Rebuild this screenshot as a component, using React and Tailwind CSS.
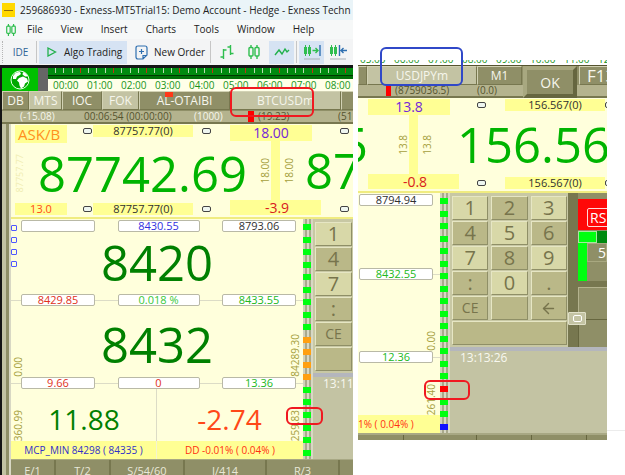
import clsx from 'clsx'
import { ArrowLeft } from 'lucide-react'

const HOURS = ['00:00', '01:00', '02:00', '03:00', '04:00', '05:00', '06:00', '07:00', '08:00']
const MENU = ['File', 'View', 'Insert', 'Charts', 'Tools', 'Window', 'Help']

const G = 'bg-[#00ff10]'
const O = 'bg-[#ffa010]'
const LEFT_METER = [G, G, G, G, G, G, G, G, G, O, O, O, O, G, G, G, G, G, G]
const RIGHT_METER = [G, G, G, G, G, G, G, G, G, G, G, G, G, G, G, 'bg-[#ff0000]', G, G, 'bg-[#1010ff]']

function Candles({ className }) {
  return (
    <svg viewBox="0 0 14 14" className={className} fill="none" stroke="#2fbe4f" strokeWidth="1.4">
      <path d="M4 0v2.5M4 11v3M10 0v2.5M10 11v3" />
      <rect x="2" y="2.5" width="4" height="8.5" rx="1" />
      <rect x="8" y="2.5" width="4" height="8.5" rx="1" />
    </svg>
  )
}

function ShiftIcon({ back }) {
  return (
    <svg viewBox="0 0 18 15" className="h-[15px] w-[18px]" fill="none">
      <path d="M2.5 0v11M6.500 0v11" stroke="#2fbe4f" />
      <path d="M1 2h3v7H1zM5 2h3v7H5z" fill="#2fbe4f" />
      {back ? (
        <path d="M10.500 0v11M18 5.500h-6M14.500 3l-2.500 2.500 2.500 2.500" stroke="#2f6fb0" strokeWidth="1.400" />
      ) : (
        <>
          <path d="M9.500 5.500h5M12.500 3L15 5.500 12.500 8" stroke="#2fbe4f" strokeWidth="1.400" />
          <path d="M17 0v11" stroke="#2f6fb0" strokeWidth="1.400" />
        </>
      )}
      <path d="M1 14h16" stroke="#a9b0b8" />
    </svg>
  )
}

function Toolbar() {
  return (
    <div className="flex h-[26px] shrink-0 items-center overflow-hidden bg-[#f3f4f5] text-[10px] whitespace-nowrap text-[#222]">
      <span className="ml-[2px] h-[22px] border-l border-dotted border-[#b5b5b5]" />
      <button className="ml-[9px] w-[17px] text-[#2f6496]">IDE</button>
      <span className="mr-[2px] ml-[7px] h-[22px] w-px shrink-0 bg-[#c6c6c6]" />
      <button className="flex h-[23px] w-[88px] shrink-0 items-center bg-[#d6e3f3] pl-[8px]">
        <svg viewBox="0 0 10 10" className="mr-[7px] h-[10px] w-[10px]" fill="none" stroke="#22b14c" strokeWidth="1.300">
          <path d="M1 1l7.500 4L1 9z" />
        </svg>
        Algo Trading
      </button>
      <button className="ml-[8px] flex w-[72px] shrink-0 items-center">
        <svg viewBox="0 0 13 15" className="mr-[6px] h-[15px] w-[13px] shrink-0" fill="none" stroke="#2f6fb0" strokeWidth="1.200">
          <path d="M3 1h7q2 0 2 2v7l-4 4H3q-2 0-2-2V3q0-2 2-2zM8 14v-3.500h4M6.500 4v5M4 6.500h5" />
        </svg>
        New Order
      </button>
      <span className="ml-[3px] h-[22px] w-px shrink-0 bg-[#c6c6c6]" />
      <button aria-label="Bars" className="ml-[8px] shrink-0">
        <svg viewBox="0 0 16 14" className="h-[14px] w-[16px]" fill="none" stroke="#2fbe4f" strokeWidth="1.400">
          <path d="M4.500 4v10M4.500 5h3M1.500 12h3M11.500 0v10M8.500 2h3M11.500 8.500h3" />
        </svg>
      </button>
      <button aria-label="Candles" className="ml-[12px] shrink-0">
        <Candles className="h-[14px] w-[14px]" />
      </button>
      <button aria-label="Line" className="ml-[8px] flex h-[23px] w-[25px] shrink-0 items-center justify-center bg-[#d6e3f3]">
        <svg viewBox="0 0 16 10" className="h-[10px] w-[16px]" fill="none" stroke="#22b14c" strokeWidth="1.400">
          <path d="M1 8l4-5 3 4 3-5 2 3 2-2" />
        </svg>
      </button>
      <span className="mx-[2px] h-[22px] w-px shrink-0 bg-[#c6c6c6]" />
      <button aria-label="Auto scroll" className="flex h-[23px] w-[25px] shrink-0 items-center justify-center bg-[#d6e3f3]">
        <ShiftIcon />
      </button>
      <button aria-label="Chart shift" className="ml-[5px] shrink-0">
        <ShiftIcon back />
      </button>
    </div>
  )
}

function Timeline() {
  return (
    <div className="flex h-[23px] shrink-0">
      <div className="flex w-[36px] shrink-0 items-center justify-center bg-[#00c000]">
        <svg viewBox="0 0 20 20" className="h-[20px] w-[20px]">
          <circle cx="10" cy="10" r="9" fill="#00a800" stroke="#e8ffe8" />
          <path d="M3 6l3-3.500 4-.500 1 2-2 1.500-2 1-1 2.500-3 0zM9 8l4-1.500 4 2 1 3-3 2-1 3-3 2-1.500-3-.500-3-2-2zM13 2l3 1.500 2 3-3 0-2.500-2z" fill="#fff" />
        </svg>
      </div>
      <div className="w-[10px] shrink-0 bg-[#666]" />
      <div className="flex min-w-0 flex-1 flex-col overflow-hidden bg-[#ffffe8]">
        <div className="flex h-[7px] shrink-0 justify-between bg-[#008a10] px-[7px]">
          {Array.from({ length: 36 }, (_, i) => (
            <span key={i} className={clsx('h-[5px] w-px', i % 4 === 3 ? 'bg-[#c03010]' : 'bg-[#b8dcb0]')} />
          ))}
        </div>
        <div className="h-[4px] shrink-0 border-t border-[#003800] bg-[#007008]" />
        <div className="flex gap-[8px] pl-[5px] text-[10px] leading-[13px] text-[#18941c]">
          {HOURS.map((h) => (
            <span key={h} className="w-[26px] shrink-0">
              {h}
            </span>
          ))}
        </div>
      </div>
    </div>
  )
}

function Tab({ light, size = 'text-[12px]', className, children }) {
  return (
    <button
      className={clsx(
        'h-[19px] shrink-0 border border-t-[#d2d2b4] border-r-[#77774f] border-b-[#77774f] border-l-[#d2d2b4] leading-[17px] whitespace-nowrap text-[#f6f6ec]',
        light ? 'bg-[#c3c3a3]' : 'bg-[#8f8f67]',
        size,
        className,
      )}
    >
      {children}
    </button>
  )
}

function Pin() {
  return <span className="block h-[6px] w-[9px] shrink-0 rounded-[2px] border border-[#444] bg-[#eef6f0]" />
}

function PriceTag({ gap = 'w-px', children }) {
  return (
    <div className="flex h-[12px] items-center">
      <Pin />
      <span className={clsx('shrink-0', gap)} />
      <span className="w-[100px] shrink-0 bg-[#ffff94] text-center text-[11px] leading-[12px] text-[#303030]">
        {children}
      </span>
      <span className="ml-auto">
        <Pin />
      </span>
    </div>
  )
}

function Upright({ className, children }) {
  return (
    <span className={clsx('rotate-180 whitespace-nowrap [writing-mode:vertical-rl]', className)}>{children}</span>
  )
}

function Spread({ top, bottom }) {
  return (
    <div className="flex w-[91px] shrink-0 flex-col">
      <div className="h-[16px] w-[82px] bg-[#ffff94] text-center text-[14px] leading-[16px] text-[#7326d9]">{top}</div>
      <div className="flex flex-1 items-center pl-[30px] text-[10px] leading-[11px] text-[#a5a03c]">
        <Upright>{top}</Upright>
        <span className="mr-[4px] h-full w-[9px] bg-[#ffff94]" />
        <Upright>{top}</Upright>
      </div>
      <div className="h-[15px] bg-[#ffff94] pl-[3px] text-center text-[14px] leading-[15px] text-[#d82020]">{bottom}</div>
    </div>
  )
}

function Meter({ ticks }) {
  return (
    <div className="flex w-[10px] shrink-0 flex-col justify-around bg-[linear-gradient(90deg,#d2d2bc_0_2px,#a9a98c_2px_4px,#d8d8c4_4px_6px,#a9a98c_6px_8px,#d8d8c4_8px)] pt-[2px]">
      {ticks.map((c, i) => (
        <span key={i} className={clsx('h-[6px] w-[8px]', c)} />
      ))}
    </div>
  )
}

function Box({ className, children }) {
  return (
    <span
      className={clsx(
        'h-[12px] shrink-0 rounded-[2px] border border-[#b9b9a6] bg-white text-center text-[11px] leading-[10px]',
        className,
      )}
    >
      {children}
    </span>
  )
}

function Line({ hidden, className }) {
  return <span className={clsx('h-px', hidden ? '' : 'bg-[#dcdcc6]', className)} />
}

function BoxRow({ hidden, items }) {
  return (
    <div className="flex h-[12px] items-center">
      <Line hidden={hidden} className="w-[10px]" />
      <Box className={clsx('w-[74px]', items[0][1])}>{items[0][0]}</Box>
      <Line hidden={hidden} className="flex-1" />
      <Box className={clsx('w-[82px]', items[1][1])}>{items[1][0]}</Box>
      <Line hidden={hidden} className="flex-1" />
      <Box className={clsx('w-[74px]', items[2][1])}>{items[2][0]}</Box>
      <Line hidden={hidden} className="w-[7px]" />
    </div>
  )
}

function Key({ light, wide, small, children }) {
  return (
    <button
      className={clsx(
        'flex h-[24px] items-center justify-center border border-t-[#e6e6c4] border-r-[#8f8f67] border-b-[#8f8f67] border-l-[#e6e6c4] text-[#77744c]',
        light ? 'bg-[#d8d8a8]' : 'bg-[#bab888]',
        wide && 'col-span-3',
        small ? 'text-[14px] leading-[22px]' : 'text-[20px] leading-[22px]',
      )}
    >
      {children}
    </button>
  )
}

function LogPanel({ time }) {
  return (
    <div className="flex-1 border-t-[4px] border-[#b4b6bd] bg-[#c3c3a3] pl-[10px] text-[12px] leading-[14px] text-[#f8f8f0]">
      {time}
    </div>
  )
}

function Marker({ className }) {
  return <div className={clsx('pointer-events-none absolute rounded-[6px] border-2', className)} />
}

function BitcoinWindow() {
  return (
    <section className="relative flex min-h-screen flex-col overflow-hidden">
      <header className="flex h-[20px] shrink-0 items-center bg-[#eaf4f8] text-[10px] whitespace-nowrap text-[#222]">
        <span className="mr-[5px] ml-[2px] flex h-[14px] w-[13px] shrink-0 items-center justify-center bg-[#ffd800]">
          <span className="h-px w-[9px] bg-[#8c6c10]" />
        </span>
        259686930 - Exness-MT5Trial15: Demo Account - Hedge - Exness Techn
      </header>
      <nav className="flex h-[19px] shrink-0 items-center gap-[18px] bg-[#f6f8f8] pl-[5px] text-[10px] text-[#222]">
        <Candles className="-mr-[8px] h-[12px] w-[12px]" />
        {MENU.map((m) => (
          <button key={m}>{m}</button>
        ))}
      </nav>
      <Toolbar />

      <div className="flex flex-1 flex-col border-t-[3px] border-l-2 border-[#151515] bg-[#c3c3a3]">
        <Timeline />
        <div className="flex h-[20px] shrink-0 overflow-hidden bg-[#8f8f67]">
          <Tab className="w-[27px]">DB</Tab>
          <Tab light className="w-[33px]">MTS</Tab>
          <Tab className="w-[40px]">IOC</Tab>
          <Tab light className="w-[37px]">FOK</Tab>
          <Tab className="relative w-[91px]">
            AL-OTAIBI
            <span className="absolute top-0 left-[25px] h-[5px] w-[8px] bg-[#ff3818]" />
          </Tab>
          <Tab light className="w-[111px]">BTCUSDm</Tab>
          <Tab className="w-[40px]" />
        </div>
        <div className="flex h-[13px] shrink-0 overflow-hidden border-b-2 border-[#77774f] bg-[#b4b38e] pl-[18px] text-[10px] leading-[11px] whitespace-nowrap text-[#55532f]">
          <span className="w-[64px] shrink-0 text-[#f6f6ec]">(-15.08)</span>
          <span className="w-[110px] shrink-0">00:06:54 (00:00:00)</span>
          <span className="w-[54px] shrink-0 text-[#f6f6ec]">(1000)</span>
          <span className="mr-[4px] w-[6px] shrink-0 bg-[#ff0000]" />
          <span className="w-[80px] shrink-0">(19.23)</span>
          <span>(51</span>
        </div>

        <div className="flex flex-1">
          <div className="w-[9px] shrink-0 bg-[linear-gradient(90deg,#c3c3a3_0_4px,#8f8f67_4px_7px,#d8d8c4_7px)]" />
          <div className="flex min-w-0 flex-1 flex-col">
            <div className="flex h-[95px] shrink-0 overflow-hidden border-b-2 border-[#f0ec80] bg-[#ffffdc] pt-px pb-[2px] pl-[4px]">
              <div className="flex w-[196px] shrink-0 flex-col">
                <div className="flex">
                  <span className="h-[18px] w-[52px] shrink-0 bg-[#ffff94] pl-[3px] text-[15px] leading-[18px] text-[#ff9020]">
                    ASK/B
                  </span>
                  <div className="ml-[16px] flex-1">
                    <PriceTag>87757.77(0)</PriceTag>
                  </div>
                </div>
                <div className="flex flex-1 items-center">
                  <Upright className="text-[9px] leading-[10px] text-[#efecb0]">87757.77</Upright>
                  <span className="ml-[13px] text-[49px] leading-[56px] whitespace-nowrap text-[#00b400]">87742.69</span>
                </div>
                <div className="flex">
                  <span className="h-[12px] w-[52px] shrink-0 bg-[#ffff94] text-center text-[11px] leading-[12px] text-[#ff4818]">
                    13.0
                  </span>
                  <div className="ml-[16px] flex-1">
                    <PriceTag>87757.77(0)</PriceTag>
                  </div>
                </div>
              </div>
              <div className="ml-[19px] flex">
                <Spread top="18.00" bottom="-3.9" />
              </div>
              <div className="-ml-[18px] flex flex-col items-start justify-between">
                <span className="ml-[37px] flex h-[12px] items-center"><Pin /></span>
                <span className="pl-[2px] text-[49px] leading-[56px] whitespace-nowrap text-[#00b400]">87</span>
                <span className="ml-[37px] flex h-[12px] items-center"><Pin /></span>
              </div>
            </div>

            <div className="flex flex-1">
              <div className="relative flex min-w-0 flex-1 flex-col bg-[#ffffdc] pt-px">
                <div className="absolute top-[6px] left-0 flex flex-col gap-[6px]">
                  {[0, 1, 2, 3].map((i) => (
                    <span key={i} className="h-[6px] w-[6px] rounded-[1px] border border-[#5058ff]" />
                  ))}
                </div>
                <BoxRow
                  hidden
                  items={[['', ''], ['8430.55', 'text-[#3030e0]'], ['8793.06', 'text-[#303030]']]}
                />
                <div className="h-[62px] text-center text-[49px] leading-[60px] text-[#008000]">8420</div>
                <BoxRow
                  items={[['8429.85', 'text-[#e03020]'], ['0.018 %', 'text-[#38c838]'], ['8433.55', 'text-[#20b820]']]}
                />
                <div className="flex h-[71px] items-end justify-between px-[2px] text-[10px] leading-[11px] text-[#a5a03c]">
                  <Upright>0.00</Upright>
                  <span className="text-[49px] leading-[66px] text-[#008000]">8432</span>
                  <Upright>84289.30</Upright>
                </div>
                <BoxRow
                  items={[['9.66', 'text-[#e03020]'], ['0', 'text-[#e03020]'], ['13.36', 'text-[#20b820]']]}
                />
                <div className="grid h-[52px] grid-cols-2 text-[10px] leading-[11px] text-[#a5a03c]">
                  <div className="flex items-end border-r border-[#dcdcc6] pl-[2px]">
                    <Upright>360.99</Upright>
                    <span className="flex-1 pr-[12px] text-center text-[28px] leading-[44px] text-[#008000]">11.88</span>
                  </div>
                  <div className="flex items-end pr-[2px]">
                    <span className="flex-1 pl-[12px] text-center text-[28px] leading-[44px] text-[#ff4818]">-2.74</span>
                    <Upright>259.83</Upright>
                  </div>
                </div>
                <div className="grid h-[18px] grid-cols-2 bg-[#ffff94] text-[10px] leading-[18px] whitespace-nowrap">
                  <span className="border-r border-[#f4f4d0] text-center text-[#3030c8]">MCP_MIN 84298 ( 84335 )</span>
                  <span className="text-center text-[#ff3010]">DD -0.01% ( 0.04% )</span>
                </div>
              </div>
              <Meter ticks={LEFT_METER} />
              <div className="flex w-[40px] shrink-0 flex-col bg-[#c8c8a4]">
                <div className="grid gap-[1px] pt-[3px] pr-[1px] pb-[2px] pl-[2px]">
                  <Key light>1</Key>
                  <Key>4</Key>
                  <Key light>7</Key>
                  <Key>:</Key>
                  <Key small>CE</Key>
                  <Key />
                </div>
                <LogPanel time="13:11" />
              </div>
            </div>

            <div className="flex h-[16px] shrink-0 overflow-hidden border-t border-[#a8a884] bg-[#8f8f67] text-[11px] leading-[22px] text-[#e8e8d8]">
              <button className="h-[22px] w-[45px] shrink-0 border-r-2 border-[#77774f]">E/1</button>
              <button className="h-[22px] w-[55px] shrink-0 border-r-2 border-[#77774f]">T/2</button>
              <button className="h-[22px] w-[74px] shrink-0 border-r-2 border-[#77774f]">S/54/60</button>
              <button className="h-[22px] w-[82px] shrink-0 border-r-2 border-[#77774f]">I/414</button>
              <button className="h-[22px] w-[73px] shrink-0 border-r-2 border-[#77774f]">R/3</button>
            </div>
          </div>
        </div>
      </div>

      <Marker className="top-[87px] left-[230px] h-[30px] w-[84px] border-[#f01820]" />
      <Marker className="top-[407px] left-[286px] h-[18px] w-[37px] border-[#f01820]" />
    </section>
  )
}

function YenWindow() {
  return (
    <section className="relative mt-[60px] mb-[35px] flex flex-col overflow-hidden">
      <div className="flex h-[5px] shrink-0 items-end gap-[8px] overflow-hidden pb-px pl-[2px] text-[10px] leading-[10px] text-[#18941c]">
        {['05:00', '06:00', '07:00', '08:00', '09:00', '10:00', '11:00', '12:00'].map((h) => (
          <span key={h} className="w-[26px] shrink-0">{h}</span>
        ))}
      </div>
      <div className="relative shrink-0">
        <div className="flex h-[20px] overflow-hidden border-t border-[#55532f] bg-[#8f8f67]">
          <Tab className="w-[9px]" />
          <Tab light className="w-[110px]">USDJPYm</Tab>
          <Tab className="w-[45px]">M1</Tab>
          <Tab size="text-[17px]" className="ml-[57px] w-[40px] pl-[7px] text-left">F13</Tab>
        </div>
        <div className="flex h-[13px] overflow-hidden border-b-2 border-[#77774f] bg-[#b4b38e] pl-[28px] text-[10px] leading-[11px] text-[#55532f]">
          <span className="mr-[4px] w-[5px] shrink-0 bg-[#ff0000]" />
          <span className="w-[82px] shrink-0">(8759036.5)</span>
          <span>(0.0)</span>
        </div>
        <button className="absolute top-[1px] left-[165px] h-[32px] w-[54px] border-4 border-t-[#a8a880] border-r-[#66663f] border-b-[#66663f] border-l-[#a8a880] bg-[#8f8f67] text-[14px] leading-[23px] text-[#f6f6ec]">
          OK
        </button>
      </div>

      <div className="flex h-[95px] shrink-0 overflow-hidden border-b-2 border-[#f0ec80] bg-[#ffffdc] pt-px pb-[2px]">
        <div className="flex w-[10px] shrink-0 items-center justify-end text-[49px] leading-[56px] text-[#00b400]">5</div>
        <Spread top="13.8" bottom="-0.8" />
        <div className="flex min-w-0 flex-1 flex-col">
          <div className="flex pl-[18px]">
            <div className="w-[137px] shrink-0">
              <PriceTag gap="w-[19px]">156.567(0)</PriceTag>
            </div>
          </div>
          <span className="-ml-[2px] flex-1 text-[49px] leading-[66px] whitespace-nowrap text-[#00b400]">156.56</span>
          <div className="flex pl-[18px]">
            <div className="w-[137px] shrink-0">
              <PriceTag gap="w-[19px]">156.567(0)</PriceTag>
            </div>
          </div>
        </div>
      </div>

      <div className="flex flex-1">
        <div className="flex w-[82px] shrink-0 flex-col bg-[#ffffdc] pt-px">
          <div className="flex h-[12px] items-center pl-px">
            <Box className="w-[74px] text-[#303030]">8794.94</Box>
          </div>
          <div className="h-[62px]" />
          <div className="flex h-[12px] items-center pl-px">
            <Box className="w-[74px] text-[#20b820]">8432.55</Box>
            <Line className="flex-1" />
          </div>
          <div className="flex h-[71px] items-end justify-end pr-[3px] text-[10px] leading-[11px] text-[#a5a03c]">
            <Upright>0.00</Upright>
          </div>
          <div className="flex h-[12px] items-center pl-px">
            <Box className="w-[74px] text-[#20b820]">12.36</Box>
            <Line className="flex-1" />
          </div>
          <div className="flex h-[52px] items-end justify-end pr-[3px] text-[10px] leading-[11px] text-[#a5a03c]">
            <Upright>261.40</Upright>
          </div>
          <div className="h-[18px] bg-[#ffff94] text-[10px] leading-[18px] whitespace-nowrap text-[#ff3010]">
            1% ( 0.04% )
          </div>
        </div>
        <Meter ticks={RIGHT_METER} />
        <div className="flex min-w-0 flex-1 flex-col bg-[#c8c8a4]">
          <div className="flex">
            <div className="grid w-[118px] shrink-0 grid-cols-3 gap-x-[3px] gap-y-[1px] pt-[3px] pr-[1px] pb-[2px] pl-[2px]">
              <Key light>1</Key>
              <Key>2</Key>
              <Key light>3</Key>
              <Key>4</Key>
              <Key light>5</Key>
              <Key>6</Key>
              <Key light>7</Key>
              <Key>8</Key>
              <Key light>9</Key>
              <Key>:</Key>
              <Key light>0</Key>
              <Key>.</Key>
              <Key small>CE</Key>
              <Key />
              <Key>
                <ArrowLeft className="h-[17px] w-[17px]" strokeWidth={2} />
              </Key>
              <Key wide />
            </div>
            <div className="relative flex min-w-0 flex-1 flex-col bg-[#77774f]">
              <div className="ml-[10px] flex h-[88px] shrink-0 flex-col overflow-hidden bg-[#8f8f67] pt-[6px]">
                <div className="h-[31px] bg-[#ff0808] pt-[6px] pl-[9px]">
                  <span className="inline-block h-[19px] w-[40px] rounded-[2px] border border-[#ffd8d8] pl-[2px] text-[14px] leading-[17px] text-white">
                    RSI
                  </span>
                </div>
                <div className="mt-px flex h-[12px] bg-[#008a10]">
                  <span className="w-[19px] border border-[#a8e8a0] bg-[#00ff10]" />
                </div>
                <div className="flex flex-1">
                  <span className="w-[9px] shrink-0 bg-[#00ff10]" />
                  <span className="h-[19px] flex-1 border border-[#a8a880] pl-[10px] text-[14px] leading-[17px] text-white">5</span>
                </div>
              </div>
              <div className="mt-[6px] ml-[10px] h-[32px] border-t border-l border-[#b4b38e] bg-[#8f8f67]" />
              <div className="ml-[10px] flex-1 border-t border-l border-[#66663f] bg-[#8f8f67]" />
              <span className="absolute top-[119px] left-0 flex h-[13px] w-[18px] items-center justify-center rounded-[1px] border border-[#e0e0c8] bg-[#c3c3a3]">
                <span className="h-[7px] w-[9px] rounded-[2px] border border-white" />
              </span>
            </div>
          </div>
          <LogPanel time="13:13:26" />
        </div>
      </div>
      <div className="flex h-[7px] shrink-0 border-t-2 border-[#a8a884] bg-[#8f8f67]">
        <span className="w-[46px] border-r border-[#66663f]" />
        <span className="w-[73px] border-r border-[#66663f]" />
        <span className="w-[55px] border-r border-[#66663f]" />
        <span className="w-[55px] border-r border-[#66663f]" />
      </div>
      <Marker className="top-[320px] left-[66px] h-[20px] w-[46px] border-[#f01820]" />
    </section>
  )
}

export default function App() {
  return (
    <main className="grid min-h-screen grid-cols-[353fr_5fr_249fr_18fr] bg-white font-['Open_Sans','Noto_Sans',sans-serif]">
      <BitcoinWindow />
      <div />
      <div className="relative flex min-w-0 flex-col *:flex-1">
        <YenWindow />
        <Marker className="top-[47px] left-[22px] h-[39px] w-[83px] border-[#3048c8]" />
      </div>
      <div className="mb-[44px] border-b border-[#ececec]" />
    </main>
  )
}
